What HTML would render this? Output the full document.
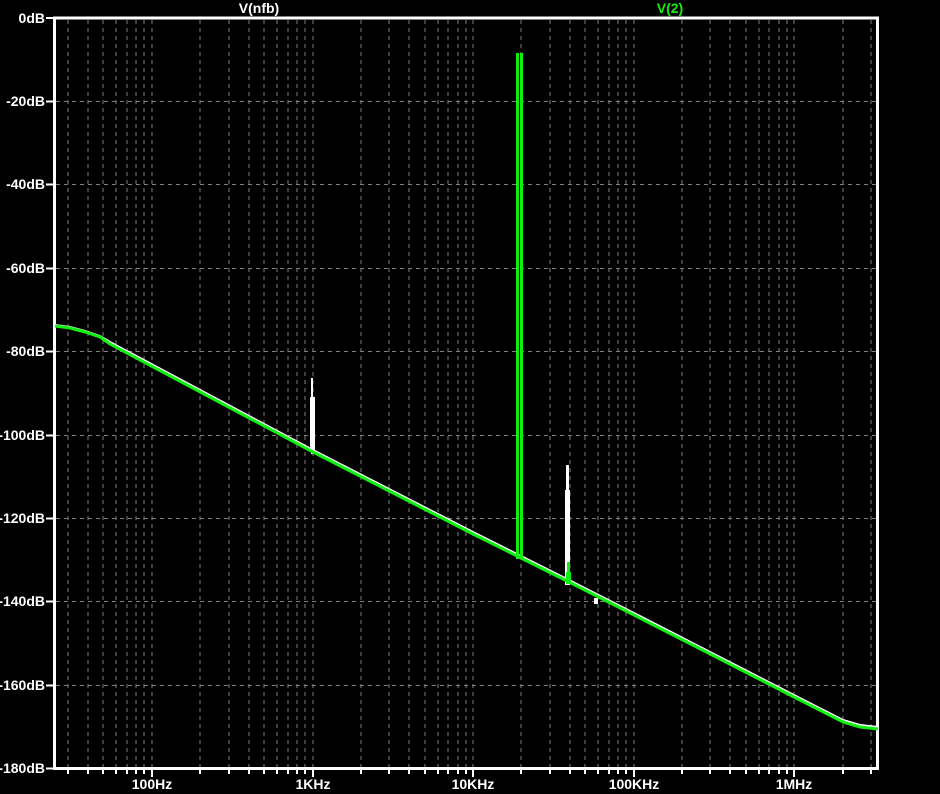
<!DOCTYPE html>
<html><head><meta charset="utf-8"><style>
html,body{margin:0;padding:0;background:#000;width:940px;height:794px;overflow:hidden}
svg{display:block}
text{font-family:"Liberation Sans",sans-serif;font-weight:bold;font-size:14px;fill:#fff}
</style></head><body>
<svg width="940" height="794" viewBox="0 0 940 794">
<g stroke="#808080" stroke-width="1" stroke-dasharray="4,4" fill="none">
<path d="M68 20V767M88 20V767M103 20V767M116 20V767M127 20V767M136 20V767M144 20V767M152 20V767
M200 20V767M229 20V767M249 20V767M264 20V767M277 20V767M288 20V767M297 20V767M305 20V767M313 20V767
M361 20V767M389 20V767M409 20V767M425 20V767M438 20V767M448 20V767M458 20V767M466 20V767M473 20V767
M521 20V767M550 20V767M570 20V767M585 20V767M598 20V767M609 20V767M618 20V767M626 20V767M634 20V767
M682 20V767M710 20V767M730 20V767M746 20V767M759 20V767M769 20V767M779 20V767M787 20V767M794 20V767
M843 20V767M871 20V767"/>
<path d="M56 101.5H876M56 184.5H876M56 268.5H876M56 351.5H876M56 435.5H876M56 518.5H876M56 601.5H876M56 685.5H876"/>
</g>
<g stroke="#fff" stroke-width="2" fill="none">
<path d="M68 769v5M88 769v5M103 769v5M116 769v5M127 769v5M136 769v5M144 769v5M200 769v5M229 769v5M249 769v5M264 769v5M277 769v5M288 769v5M297 769v5M305 769v5M361 769v5M389 769v5M409 769v5M425 769v5M438 769v5M448 769v5M458 769v5M466 769v5M521 769v5M550 769v5M570 769v5M585 769v5M598 769v5M609 769v5M618 769v5M626 769v5M682 769v5M710 769v5M730 769v5M746 769v5M759 769v5M769 769v5M779 769v5M787 769v5M843 769v5M871 769v5"/>
<path d="M152 769v8M313 769v8M473 769v8M634 769v8M794 769v8"/>
<path d="M46 18H54M46 101.5H54M46 184.5H54M46 268.5H54M46 351.5H54M46 435.5H54M46 518.5H54M46 601.5H54M46 685.5H54M46 768.5H54"/>
</g>
<rect x="54.5" y="18" width="823" height="750.5" fill="none" stroke="#fff" stroke-width="3"/>
<g text-anchor="end">
<text x="45" y="23">0dB</text>
<text x="45" y="106">-20dB</text>
<text x="45" y="189">-40dB</text>
<text x="45" y="273">-60dB</text>
<text x="45" y="356">-80dB</text>
<text x="45" y="440">-100dB</text>
<text x="45" y="523">-120dB</text>
<text x="45" y="606">-140dB</text>
<text x="45" y="690">-160dB</text>
<text x="45" y="773">-180dB</text>
</g>
<g text-anchor="middle">
<text x="152" y="789">100Hz</text>
<text x="313" y="789">1KHz</text>
<text x="473" y="789">10KHz</text>
<text x="634" y="789">100KHz</text>
<text x="794" y="789">1MHz</text>
<text x="259" y="13">V(nfb)</text>
<text x="670" y="13" style="fill:#10f010">V(2)</text>
</g>
<g fill="#fff">
<rect x="311" y="378" width="2" height="76"/>
<rect x="310" y="397" width="5" height="55"/>
<rect x="566" y="465" width="3" height="120"/>
<rect x="565" y="490" width="5" height="95"/>
<rect x="594" y="598" width="4" height="6"/>
</g>
<polyline fill="none" stroke="#fff" stroke-width="2" points="55,325 70,327 85,331 100,336 110,342 313,450 473,532 521,556 569,580 634,613 794,695 843,720 860,725 878,727"/>
<g fill="#10f010">
<rect x="516" y="53" width="3" height="506"/>
<rect x="520" y="53" width="3" height="506"/>
<rect x="567" y="562" width="3" height="22"/>
<rect x="566" y="572" width="5" height="12"/>
</g>
<polyline fill="none" stroke="#10f010" stroke-width="3" points="55,326 70,328 85,332 100,337 110,344 313,452 473,534 521,558 569,582 634,615 794,697 843,722 860,727 878,729"/>
</svg>
</body></html>
